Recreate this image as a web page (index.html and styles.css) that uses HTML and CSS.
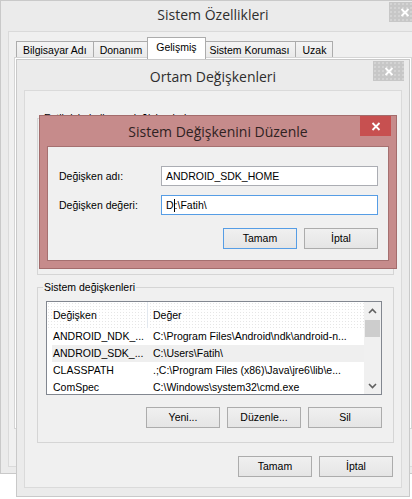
FILE: index.html
```html
<!DOCTYPE html>
<html lang="tr">
<head>
<meta charset="utf-8">
<title>Sistem Özellikleri</title>
<link rel="stylesheet" href="styles.css">
</head>
<body>
  <section class="win win-props">
    <header class="titlebar">
      <span class="title">Sistem Özellikleri</span>
      <span class="close close-inactive"><svg width="10" height="9" viewBox="0 0 10 9"><path d="M1.5 1L8.5 8M8.5 1L1.5 8" stroke="#fff" stroke-width="1.8" fill="none"/></svg></span>
    </header>
    <div class="client client-props">
      <div class="tabs">
        <span class="tab">Bilgisayar Adı</span>
        <span class="tab">Donanım</span>
        <span class="tab sel">Gelişmiş</span>
        <span class="tab">Sistem Koruması</span>
        <span class="tab">Uzak</span>
      </div>
      <div class="tabpanel"></div>
    </div>
  </section>

  <section class="win win-env">
    <header class="titlebar">
      <span class="title">Ortam Değişkenleri</span>
      <span class="close close-inactive"><svg width="10" height="9" viewBox="0 0 10 9"><path d="M1.5 1L8.5 8M8.5 1L1.5 8" stroke="#fff" stroke-width="1.8" fill="none"/></svg></span>
    </header>
    <div class="client client-env">
      <div class="group group-user">
        <span class="legend">Fatih için kullanıcı değişkenleri</span>
      </div>
      <div class="group group-sys">
        <span class="legend">Sistem değişkenleri</span>
        <div class="listbox">
          <div class="lv">
            <div class="lv-head"><span class="c1">Değişken</span><span class="c2">Değer</span></div>
            <div class="lv-row"><span class="c1">ANDROID_NDK_...</span><span class="c2">C:\Program Files\Android\ndk\android-n...</span></div>
            <div class="lv-row sel"><span class="c1">ANDROID_SDK_...</span><span class="c2">C:\Users\Fatih\</span></div>
            <div class="lv-row"><span class="c1">CLASSPATH</span><span class="c2">.;C:\Program Files (x86)\Java\jre6\lib\e...</span></div>
            <div class="lv-row"><span class="c1">ComSpec</span><span class="c2">C:\Windows\system32\cmd.exe</span></div>
          </div>
          <div class="vscroll">
            <span class="sb-btn"><svg width="9" height="6" viewBox="0 0 9 6"><path d="M1 5L4.5 1.5L8 5" stroke="#606060" stroke-width="1.6" fill="none"/></svg></span>
            <span class="sb-track"><span class="sb-thumb"></span></span>
            <span class="sb-btn"><svg width="9" height="6" viewBox="0 0 9 6"><path d="M1 1L4.5 4.5L8 1" stroke="#606060" stroke-width="1.6" fill="none"/></svg></span>
          </div>
        </div>
        <div class="actions">
          <button class="btn">Yeni...</button>
          <button class="btn">Düzenle...</button>
          <button class="btn">Sil</button>
        </div>
      </div>
      <div class="actions actions-env">
        <button class="btn">Tamam</button>
        <button class="btn">İptal</button>
      </div>
    </div>
  </section>

  <section class="win win-edit">
    <header class="titlebar">
      <span class="title">Sistem Değişkenini Düzenle</span>
      <span class="close close-active"><svg width="10" height="9" viewBox="0 0 10 9"><path d="M1.5 1L8.5 8M8.5 1L1.5 8" stroke="#fff" stroke-width="1.8" fill="none"/></svg></span>
    </header>
    <div class="client client-edit">
      <div class="field"><span class="lbl">Değişken adı:</span><div class="textbox">ANDROID_SDK_HOME</div></div>
      <div class="field"><span class="lbl">Değişken değeri:</span><div class="textbox focus">D<span class="caret"></span>:\Fatih\</div></div>
      <div class="actions actions-edit">
        <button class="btn default">Tamam</button>
        <button class="btn">İptal</button>
      </div>
    </div>
  </section>
</body>
</html>
```

FILE: styles.css
```css
* { box-sizing: border-box; margin: 0; padding: 0; }
html, body { width: 412px; height: 499px; }
body {
  position: relative;
  overflow: hidden;
  background: #fff;
  font-family: "Liberation Sans", Arial, sans-serif;
  font-size: 10.5px;
  line-height: 13px;
  color: #000;
}

/* windows */
.win {
  position: absolute;
  display: flex;
  flex-direction: column;
  background: #ebebeb;
  border: 1px solid #c9c9c9;
  padding: 0 7px 7px;
}
.win-props { left: 0; top: 0; width: 426px; height: 474px; padding-bottom: 6px; }
.win-env { left: 16px; top: 59px; width: 394px; height: 438px; padding-bottom: 8px; }
.win-edit {
  left: 39px; top: 115px; width: 358px; height: 154px;
  background: #c68b8b;
  border-color: #a36c6c;
}

.titlebar {
  position: relative;
  flex: none;
  height: 30px;
  display: flex;
  align-items: center;
  justify-content: center;
}
.win-props .titlebar { padding-bottom: 3px; }
.win-env .titlebar { padding-top: 2px; }
.title {
  font-family: "Open Sans", "Noto Sans", sans-serif;
  font-size: 14px;
  line-height: 19px;
  color: #2e2e2e;
  white-space: nowrap;
}
.win-edit .title { color: #2f2222; }

.close {
  position: absolute;
  top: 1px;
  right: -2px;
  width: 31px;
  height: 20px;
  display: flex;
  align-items: center;
  justify-content: center;
}
.close-inactive {
  background-color: #c7c7c7;
  background-image: radial-gradient(circle, #d4d4d4 0.7px, transparent 0.9px);
  background-size: 4px 4px;
}
.close-active { top: 0; background: #c75050; }

.client {
  flex: 1;
  min-height: 0;
  display: flex;
  flex-direction: column;
  background: #f0f0f0;
  border: 1px solid #dadada;
}
.client-edit { border-color: #a57070; padding: 19px 10px 0 11px; }
.client-props { padding: 5px 0 0 5px; }
.client-env { padding: 27px 7px 0 12px; }

/* tabs */
.tabs {
  flex: none;
  height: 21px;
  display: flex;
  align-items: flex-end;
  padding-left: 2px;
}
.tab {
  height: 17px;
  padding: 0 6px;
  display: flex;
  align-items: center;
  border: 1px solid #acacac;
  border-bottom: 0;
  background: linear-gradient(#f4f4f4, #e9e9e9);
  white-space: nowrap;
}
.tab + .tab { margin-left: -1px; }
.tab.sel {
  position: relative;
  z-index: 1;
  height: 22px;
  margin: 0 -2px -1px;
  padding: 0 8px 3px;
  background: #fff;
}
.tabpanel {
  flex: none;
  height: 372px;
  margin-top: -1px;
  margin-right: 5px;
  border: 1px solid #d5d5d5;
  background: #fff;
}

/* group boxes */
.group {
  position: relative;
  flex: none;
  border: 1px solid #d5d5d5;
}
.group-user { height: 157px; }
.group-sys { height: 156px; margin-top: 12px; padding: 13px 11px 0 8px; }
.legend {
  position: absolute;
  top: -7px;
  left: 5px;
  padding: 0 1px;
  background: #f0f0f0;
  line-height: 13px;
  white-space: nowrap;
}

/* list view */
.listbox {
  display: flex;
  width: 336px;
  height: 94px;
  border: 1px solid #828790;
  background: #fff;
  overflow: hidden;
}
.lv { flex: 1; min-width: 0; overflow: hidden; }
.lv-head {
  display: flex;
  height: 26px;
  background-image: radial-gradient(circle, #e6e6e6 0.6px, transparent 0.8px);
  background-size: 3px 3px;
}
.lv-head .c1 {
  width: 101px;
  flex: none;
  padding-left: 6px;
  border-right: 1px solid #e2e8ef;
  display: flex;
  align-items: center;
}
.lv-head .c2 { flex: 1; padding-left: 5px; display: flex; align-items: center; }
.lv-row {
  display: flex;
  align-items: center;
  height: 17px;
  margin-left: 5px;
  white-space: nowrap;
}
.lv-row.sel { background: #efefef; }
.lv-row .c1 { width: 96px; flex: none; padding-left: 1px; overflow: hidden; }
.lv-row .c2 { padding-left: 5px; }

.vscroll {
  width: 17px;
  flex: none;
  display: flex;
  flex-direction: column;
  background: #f0f0f0;
}
.sb-btn { height: 17px; flex: none; display: flex; align-items: center; justify-content: center; }
.sb-track { flex: 1; display: flex; flex-direction: column; }
.sb-thumb { height: 17px; margin: 1px 1px 0; background: #cdcdcd; }

/* buttons */
.actions { display: flex; justify-content: flex-end; gap: 7px; margin-top: 12px; }
.actions-env { margin-top: 13px; padding-right: 1px; }
.actions-edit { margin-top: 13px; }
.btn {
  width: 74px;
  height: 21px;
  border: 1px solid #acacac;
  background: linear-gradient(#f0f0f0, #e5e5e5);
  font: inherit;
  color: #000;
  display: flex;
  align-items: center;
  justify-content: center;
  padding: 0;
}
.btn.default { border-color: #569de5; }

/* fields */
.field { display: flex; align-items: center; height: 20px; }
.field + .field { margin-top: 9px; }
.lbl { width: 102px; flex: none; white-space: nowrap; }
.textbox {
  width: 217px;
  height: 20px;
  border: 1px solid #abadb3;
  background: #fff;
  padding-left: 4px;
  display: flex;
  align-items: center;
  white-space: nowrap;
}
.textbox.focus { border-color: #569de5; }
.caret { width: 1px; height: 13px; background: #000; flex: none; }
```
